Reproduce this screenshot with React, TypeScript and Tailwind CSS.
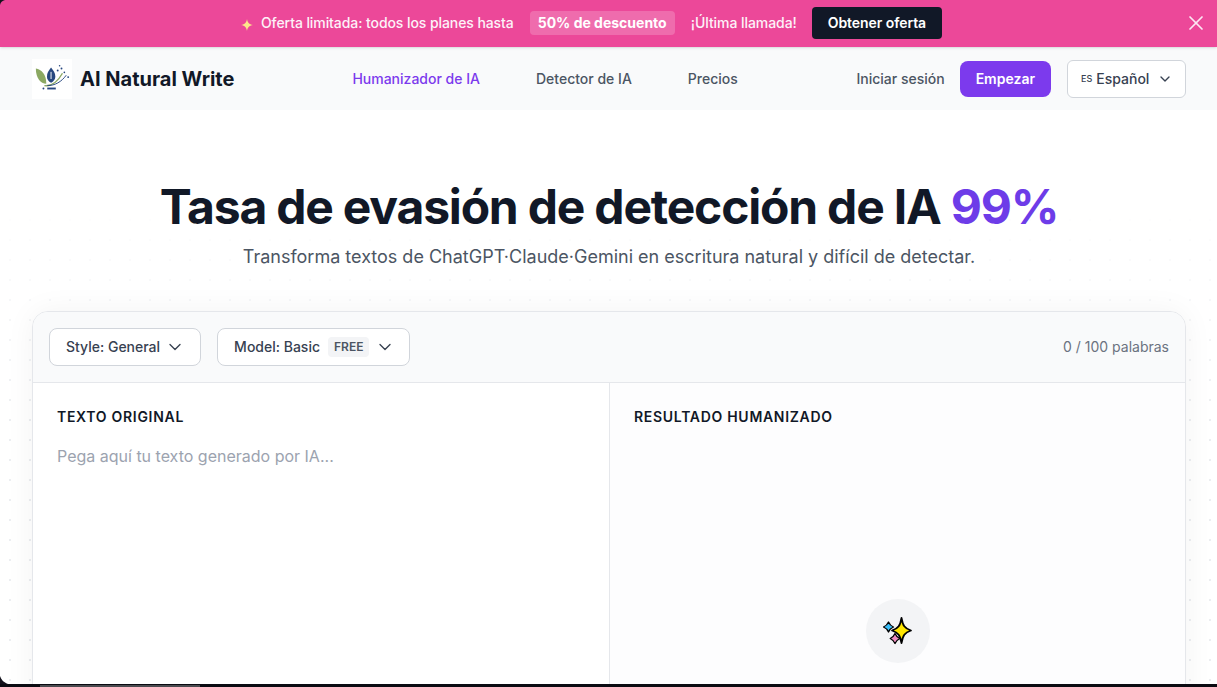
import { ChevronDown, X } from "lucide-react";

function Logo() {
  return (
    <div className="w-10 h-10 bg-white flex items-center justify-center">
      <svg width="38" height="38" viewBox="0 0 40 40">
        <path d="M3 9C9 10 14 15 14 25C8 25 3 19 3 9Z" fill="#8ba862" />
        <path d="M19 8C21.5 11 23.5 14 23.5 17.5C23.5 20.5 21.5 22.5 19 24C16.5 22.5 14.7 20.5 14.7 17.5C14.7 14 16.5 11 19 8Z" fill="#27477f" />
        <path d="M19 12.5V20" stroke="#fff" strokeWidth="1" />
        <path d="M12 27C20 28 26 23 31 14" stroke="#8ba862" strokeWidth="1.4" fill="none" />
        <path d="M15 27C23 27 30 23 35 16" stroke="#27477f" strokeWidth="1" fill="none" />
        <path d="M15 30H24" stroke="#27477f" strokeWidth="2" />
        <circle cx="26" cy="11" r="1" fill="#27477f" />
        <circle cx="30" cy="9" r="1" fill="#27477f" />
        <circle cx="33" cy="13" r="0.9" fill="#27477f" />
        <circle cx="37" cy="18" r="1" fill="#27477f" />
        <circle cx="28" cy="6" r="0.8" fill="#27477f" />
        <circle cx="11" cy="30" r="1" fill="#27477f" />
      </svg>
    </div>
  );
}

function Sparkles() {
  return (
    <svg width="30" height="30" viewBox="0 0 30 30">
      <path d="M5.5 6C6.6 8.6 7.6 9.8 10.5 11C7.6 12.2 6.6 13.4 5.5 16C4.4 13.4 3.4 12.2 0.5 11C3.4 9.8 4.4 8.6 5.5 6Z" fill="#38bdf8" stroke="#000" strokeWidth="1.3" strokeLinejoin="round" />
      <path d="M12 17.5C13 20 14 21.2 16.8 22.5C14 23.8 13 25 12 27.5C11 25 10 23.8 7.2 22.5C10 21.2 11 20 12 17.5Z" fill="#f08cc0" stroke="#000" strokeWidth="1.3" strokeLinejoin="round" />
      <path d="M18.5 2C19.8 9.5 21.5 12.5 28 14.5C21.5 16.5 19.8 19.5 18.5 27C17.2 19.5 15.5 16.5 9 14.5C15.5 12.5 17.2 9.5 18.5 2Z" fill="#ffe600" stroke="#000" strokeWidth="1.8" strokeLinejoin="round" />
    </svg>
  );
}

export default function App() {
  return (
    <div
      className="relative h-[687px] overflow-hidden bg-white text-[#111827]"
      style={{ fontFamily: "Inter, sans-serif" }}
    >
      <div className="absolute inset-0 bg-[radial-gradient(#eceef1_1px,transparent_1.5px)] bg-[size:20px_20px] bg-[position:0_10px] [mask-image:linear-gradient(to_bottom,transparent_200px,black_420px)]" />
      <div className="relative">
        <div className="relative z-10 h-[47px] bg-[#ec4899] flex items-center justify-center pr-[34px] pb-px text-white text-sm shadow-sm">
          <svg width="12" height="12" viewBox="0 0 12 12" className="mr-2 mt-[3px]">
            <path d="M6 0C6.5 3.5 8 5.3 12 6C8 6.7 6.5 8.5 6 12C5.5 8.5 4 6.7 0 6C4 5.3 5.5 3.5 6 0Z" fill="#fde68a" />
          </svg>
          <span className="font-medium text-[#fdf2f8] tracking-[-0.08px]">Oferta limitada: todos los planes hasta</span>
          <span className="ml-4 bg-white/20 rounded px-2 h-6 flex items-center font-bold text-sm">50% de descuento</span>
          <span className="ml-4 font-medium text-[#fdf2f8] tracking-[-0.06px]">¡Última llamada!</span>
          <span className="ml-[15px] bg-[#111827] rounded h-8 px-4 flex items-center font-semibold tracking-[-0.07px]">Obtener oferta</span>
          <X className="absolute right-[9px] top-[11px] w-6 h-6 text-[#fce7f3]" strokeWidth={1.75} />
        </div>

        <nav className="h-[63px] bg-[#f9fafb] flex items-center pl-8 pr-[31px]">
          <Logo />
          <span className="ml-2 text-xl font-bold">AI Natural Write</span>
          <div className="ml-[118px] flex items-center gap-14 text-sm font-medium text-[#4b5563]">
            <span className="text-[#7c3aed]">Humanizador de IA</span>
            <span>Detector de IA</span>
            <span>Precios</span>
          </div>
          <span className="ml-auto text-sm font-medium text-[#4b5563]">Iniciar sesión</span>
          <span className="ml-[15px] h-9 px-4 rounded-lg bg-[#7c3aed] text-white text-sm font-semibold flex items-center">Empezar</span>
          <div className="ml-4 h-[38px] w-[119px] rounded-md border border-[#d1d5db] bg-white flex items-center pl-[13px] text-sm font-medium text-[#374151]">
            <span className="text-[9px] mr-1 mt-[2px]">ES</span>
            Español
            <ChevronDown className="ml-2 w-4 h-4" />
          </div>
        </nav>

        <header className="pt-[66px] pl-px text-center">
          <h1 className="text-5xl leading-[62px] font-bold tracking-tight">
            Tasa de evasión de detección de IA <span className="text-[#6d3ce8]">99%</span>
          </h1>
          <p className="mt-[5px] text-lg leading-7 text-[#4b5563]">
            Transforma textos de ChatGPT·Claude·Gemini en escritura natural y difícil de detectar.
          </p>
        </header>

        <section className="mt-[40px] mx-8 w-[1154px] h-[500px] rounded-2xl border border-[#e5e7eb] bg-white shadow-[0_0_30px_rgba(0,0,0,0.05)] overflow-hidden">
          <div className="h-[71px] bg-[#f9fafb] border-b border-[#e5e7eb] flex items-center px-4 gap-4">
            <div className="h-[38px] pl-4 pr-[15px] rounded-lg border border-[#d1d5db] bg-white flex items-center text-sm font-medium text-[#374151]">
              Style: General
              <ChevronDown className="ml-[5px] w-5 h-5" strokeWidth={1.6} />
            </div>
            <div className="h-[38px] pl-4 pr-[14px] rounded-lg border border-[#d1d5db] bg-white flex items-center text-sm font-medium text-[#374151]">
              Model: Basic
              <span className="ml-2 px-[6px] h-5 rounded bg-[#f3f4f6] flex items-center text-xs font-semibold text-[#4b5563]">FREE</span>
              <ChevronDown className="ml-[6px] w-5 h-5" strokeWidth={1.6} />
            </div>
            <span className="ml-auto text-sm text-[#6b7280]">0 / 100 palabras</span>
          </div>
          <div className="flex h-full">
            <div className="w-[577px] border-r border-[#e5e7eb] px-6 pt-6">
              <h2 className="text-sm leading-5 font-semibold tracking-[0.7px]">TEXTO ORIGINAL</h2>
              <p className="mt-[17px] text-base leading-6 text-[#9ca3af]">Pega aquí tu texto generado por IA...</p>
            </div>
            <div className="flex-1 bg-[#fdfdfe] px-6 pt-6">
              <h2 className="text-sm leading-5 font-semibold tracking-[0.7px]">RESULTADO HUMANIZADO</h2>
              <div className="mt-[172px] ml-[232px] w-16 h-16 rounded-full bg-[#f3f4f6] flex items-center justify-center">
                <Sparkles />
              </div>
            </div>
          </div>
        </section>
      </div>

      <div className="absolute left-0 right-0 bottom-0 h-[3px] bg-[#0b0b12]">
        <div className="absolute left-10 top-[1px] w-40 h-[2px] bg-[#4b4b50]" />
      </div>
      <svg width="6" height="6" viewBox="0 0 6 6" className="absolute left-0 top-0 z-20">
        <path d="M0 0H5C2 0.8 0.8 2 0 5Z" fill="#14121c" />
      </svg>
      <svg width="10" height="10" viewBox="0 0 10 10" className="absolute left-0 bottom-[3px]">
        <path d="M0 2C1 5 3 8 8 10H0Z" fill="#14121c" />
      </svg>
    </div>
  );
}
